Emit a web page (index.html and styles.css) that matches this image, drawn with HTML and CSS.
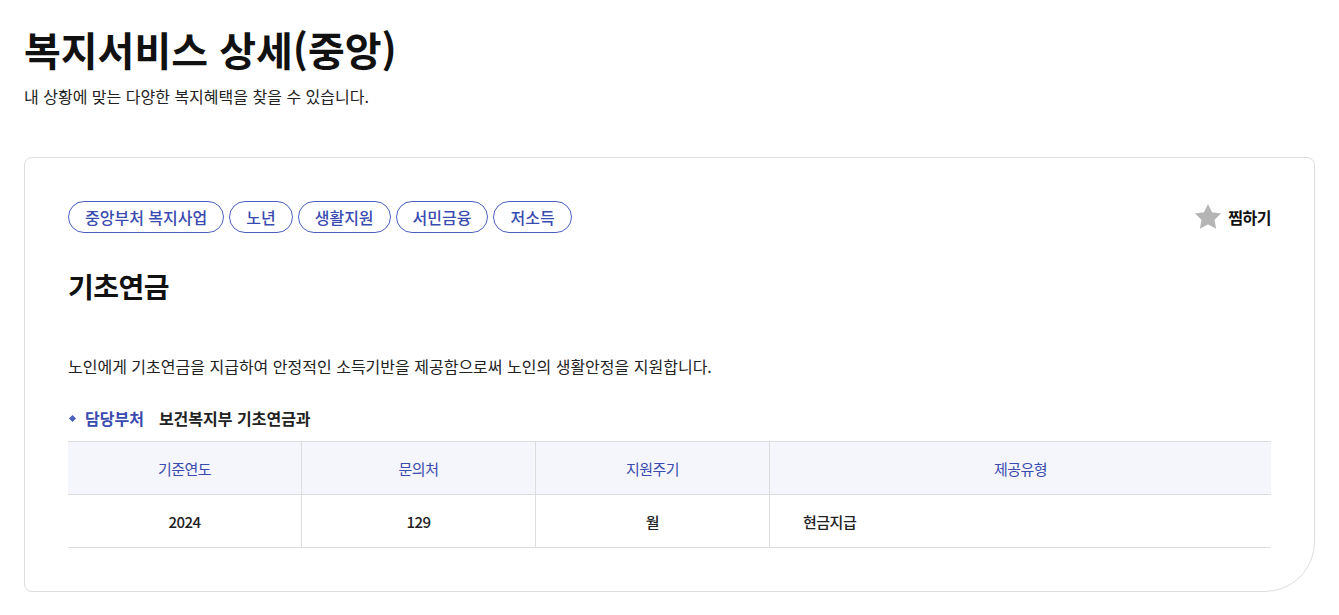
FILE: index.html
```html
<!DOCTYPE html>
<html lang="ko">

<head>
    <meta charset="UTF-8">
    <meta name="viewport" content="width=device-width, initial-scale=1.0">
    <title>복지서비스 상세(중앙)</title>
    <link rel="stylesheet" href="styles.css">
</head>

<body>
    <header class="page-head">
        <h1>복지서비스 상세(중앙)</h1>
        <p>내 상황에 맞는 다양한 복지혜택을 찾을 수 있습니다.</p>
    </header>

    <section class="detail-card">
        <div class="card-top">
            <ul class="tags">
                <li>중앙부처 복지사업</li>
                <li>노년</li>
                <li>생활지원</li>
                <li>서민금융</li>
                <li>저소득</li>
            </ul>
            <button type="button" class="like-button">
                <svg width="30" height="30" viewBox="0 0 24 24" aria-hidden="true">
                    <path d="M12 1.5l3.2 6.6 7.2 1-5.2 5 1.3 7.2L12 17.9l-6.5 3.4 1.3-7.2-5.2-5 7.2-1z" fill="#b5b5b5" />
                </svg>
                찜하기
            </button>
        </div>

        <h2>기초연금</h2>

        <p class="summary">노인에게 기초연금을 지급하여 안정적인 소득기반을 제공함으로써 노인의 생활안정을 지원합니다.</p>

        <div class="dept">
            <span class="dept-label">담당부처</span>
            <span class="dept-name">보건복지부 기초연금과</span>
        </div>

        <table class="info-table">
            <thead>
                <tr>
                    <th class="col-year">기준연도</th>
                    <th class="col-contact">문의처</th>
                    <th class="col-cycle">지원주기</th>
                    <th>제공유형</th>
                </tr>
            </thead>
            <tbody>
                <tr>
                    <td>2024</td>
                    <td>129</td>
                    <td>월</td>
                    <td class="left">현금지급</td>
                </tr>
            </tbody>
        </table>
    </section>
</body>

</html>
```

FILE: styles.css
```css
body {
    font-family: "Noto Sans CJK KR", "Noto Sans", sans-serif;
    margin: 0;
    padding: 0 24px;
    background-color: #fff;
    color: #111;
}

.page-head h1 {
    margin: 0;
    padding-top: 21px;
    font-size: 40px;
    font-weight: 700;
    line-height: 56px;
}

.page-head p {
    margin: 8px 0 0;
    font-size: 16px;
    line-height: 22px;
    color: #222;
}

.detail-card {
    margin-top: 50px;
    padding: 43px;
    border: 1px solid #dddddd;
    border-radius: 8px 8px 50px 8px;
}

.card-top {
    display: flex;
    justify-content: space-between;
    align-items: center;
}

.tags {
    display: flex;
    gap: 5px;
    margin: 0;
    padding: 0;
    list-style: none;
}

.tags li {
    height: 32px;
    padding: 0 16px;
    border: 1px solid #4b5fbf;
    border-radius: 17px;
    box-sizing: border-box;
    color: #3a4bb0;
    font-size: 16px;
    font-weight: 500;
    line-height: 30px;
}

.like-button {
    display: flex;
    align-items: center;
    gap: 5px;
    padding: 0;
    border: none;
    background: none;
    font-family: inherit;
    font-size: 16px;
    font-weight: 700;
    letter-spacing: -0.5px;
    color: #111;
    cursor: pointer;
}

h2 {
    margin: 33px 0 0;
    font-size: 28px;
    font-weight: 700;
    letter-spacing: -0.5px;
    line-height: 40px;
}

.summary {
    margin: 49px 0 0;
    font-size: 16px;
    line-height: 22px;
    color: #222;
}

.dept {
    display: flex;
    align-items: center;
    margin-top: 30px;
    font-size: 16px;
    font-weight: 700;
    line-height: 22px;
}

.dept-label {
    position: relative;
    padding-left: 17px;
    margin-right: 15px;
    color: #3a4bb0;
}

.dept-label::before {
    content: "";
    position: absolute;
    left: 2px;
    top: 9px;
    width: 5px;
    height: 5px;
    background-color: #4b5fbf;
    transform: rotate(45deg);
}

.dept-name {
    color: #222;
}

.info-table {
    width: 100%;
    margin-top: 12px;
    border-collapse: collapse;
    font-size: 15px;
    letter-spacing: -0.5px;
}

.info-table th,
.info-table td {
    height: 52px;
    padding: 0;
    border-top: 1px solid #dddddd;
    border-bottom: 1px solid #dddddd;
    border-left: 1px solid #dddddd;
    text-align: center;
}

.info-table th:first-child,
.info-table td:first-child {
    border-left: none;
}

.info-table th {
    background-color: #f4f6fb;
    color: #3a4bb0;
    font-weight: 400;
}

.info-table td {
    color: #222;
    font-weight: 500;
}

.info-table td.left {
    text-align: left;
    padding-left: 33px;
}

.col-year,
.col-contact,
.col-cycle {
    width: 233px;
}
```
